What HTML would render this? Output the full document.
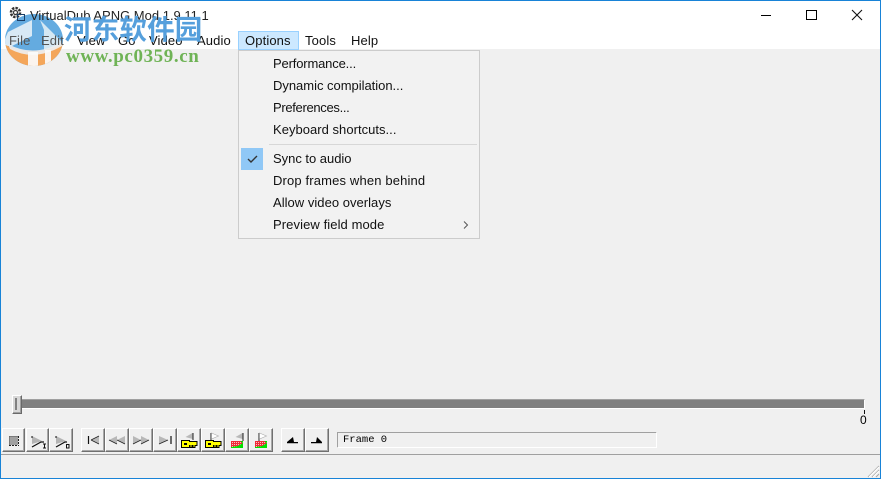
<!DOCTYPE html>
<html><head><meta charset="utf-8"><style>
html,body{margin:0;padding:0;background:#fff}
#w{position:relative;width:881px;height:479px;overflow:hidden;background:#f0f0f0;font-family:"Liberation Sans",sans-serif}
.t{position:absolute;white-space:nowrap;font-size:13px;line-height:16px;color:#111}
.m{letter-spacing:.12px}
.i{letter-spacing:-.02px}
.b{position:absolute;top:428px;height:24px;box-sizing:border-box;background:#f0f0f0;border:1px solid;border-color:#fff #707070 #707070 #fff;box-shadow:inset -1px -1px 0 #a8a8a8}
svg{position:absolute;left:0;top:0}
</style></head><body><div id="w">
<div style="position:absolute;left:0;top:0;width:881px;height:49px;background:#fff"></div>

<!-- logo sits beneath the window text -->
<svg width="70" height="70" viewBox="0 0 70 70">
<defs><clipPath id="c"><ellipse cx="34" cy="40" rx="29" ry="26"/></clipPath></defs>
<g clip-path="url(#c)">
<rect x="0" y="10" width="70" height="60" fill="#4f9fdc" opacity=".88"/>
<path d="M8 32L32 20V36L12 46H2Z" fill="#f2f6f9" opacity=".82"/>
<path d="M40 20L62 42V46L44 50V30Z" fill="#f4f7f9" opacity=".78"/>
<path d="M0 42Q34 62 70 40V70H0Z" fill="#f4a65a"/>
<path d="M8 44Q34 58 62 42L62 46Q34 62 10 49Z" fill="#eeeeee" opacity=".92"/>
<path d="M28 52h10v16h-10zM45 50h6v16h-6z" fill="#fbfbfb" opacity=".92"/>
</g>
</svg>

<svg width="881" height="479" viewBox="0 0 881 479" shape-rendering="crispEdges">
<rect x="238" y="31" width="60" height="18" fill="#cce8ff" stroke="#99d1ff" transform="translate(.5 .5)"/>
<path d="M761 15h10" stroke="#000" fill="none" transform="translate(0 .5)"/>
<rect x="806.500" y="10.500" width="10" height="9" fill="none" stroke="#000"/>
<g shape-rendering="geometricPrecision"><path d="M852 10l10 10M862 10l-10 10" stroke="#111" stroke-width="1.100" fill="none"/></g>
</svg>

<svg width="40" height="30" viewBox="0 0 40 30">
<g fill="none" stroke="#333"><circle cx="15.500" cy="12.500" r="4.500" stroke-width="2.600" stroke-dasharray="2.400 1.100"/><circle cx="15.500" cy="12.500" r="2" stroke-width="1.200"/><path d="M17.500 14.500h7v6h-7z" stroke-width="1" stroke="#1c3f66"/></g>
</svg>

<div class="t" style="left:30px;top:8px;font-size:13px;color:#222;letter-spacing:0">VirtualDub APNG Mod 1.9.11.1</div>
<div class="t m" style="left:9px;top:33px;color:#555">File</div>
<div class="t m" style="left:41px;top:33px;color:#555">Edit</div>
<div class="t m" style="left:77px;top:33px">View</div>
<div class="t m" style="left:118px;top:33px">Go</div>
<div class="t m" style="left:149px;top:33px">Video</div>
<div class="t m" style="left:197px;top:33px">Audio</div>
<div class="t m" style="left:245px;top:33px">Options</div>
<div class="t m" style="left:305px;top:33px">Tools</div>
<div class="t m" style="left:351px;top:33px">Help</div>

<div class="t" style="left:64px;top:12px;font-family:'Liberation Sans','Noto Sans CJK SC',sans-serif;font-weight:700;font-size:27.500px;line-height:36px;color:#559fdc;letter-spacing:.2px">河东软件园</div>
<div class="t" style="left:66px;top:47px;font-family:'Liberation Serif',serif;font-weight:700;font-size:19px;line-height:20px;color:#6fb356;letter-spacing:.6px">www.pc0359.cn</div>

<!-- menu -->
<div style="position:absolute;left:238px;top:50px;width:242px;height:189px;box-sizing:border-box;background:#f2f2f2;border:1px solid #ccc"></div>
<div style="position:absolute;left:269px;top:144px;width:208px;height:1px;background:#d7d7d7"></div>
<div style="position:absolute;left:241px;top:148px;width:22px;height:22px;background:#90c8f6"></div>
<svg width="881" height="479" viewBox="0 0 881 479">
<path d="M248 159l3 3 6-6" fill="none" stroke="#333" stroke-width="1.400"/>
<path d="M464 221.500l3.500 3.500-3.500 3.500" fill="none" stroke="#555" stroke-width="1"/>
</svg>
<div class="t" style="left:273px;top:56px;letter-spacing:-.16px">Performance...</div>
<div class="t" style="left:273px;top:78px;letter-spacing:-.02px">Dynamic compilation...</div>
<div class="t" style="left:273px;top:100px;letter-spacing:-.32px">Preferences...</div>
<div class="t" style="left:273px;top:122px;letter-spacing:.03px">Keyboard shortcuts...</div>
<div class="t" style="left:273px;top:151px;letter-spacing:-.02px">Sync to audio</div>
<div class="t" style="left:273px;top:173px;letter-spacing:.15px">Drop frames when behind</div>
<div class="t" style="left:273px;top:195px;letter-spacing:.03px">Allow video overlays</div>
<div class="t" style="left:273px;top:217px;letter-spacing:.09px">Preview field mode</div>

<!-- slider -->
<div style="position:absolute;left:14px;top:399px;width:851px;height:10px;box-sizing:border-box;background:#808080;border-top:1px solid #a0a0a0;border-right:1px solid #fff;border-bottom:1px solid #fff"></div>
<div style="position:absolute;left:12px;top:395px;width:10px;height:19px;box-sizing:border-box;background:#d8d8d8;border:1px solid;border-color:#fff #696969 #696969 #fff;box-shadow:inset -1px -1px 0 #a0a0a0"></div>
<div style="position:absolute;left:15px;top:398px;width:2px;height:12px;background:#808080"></div>
<div style="position:absolute;left:864px;top:410px;width:1px;height:4px;background:#111"></div>
<div class="t" style="left:860px;top:414px;font-size:12px;line-height:13px;color:#000">0</div>

<!-- buttons -->
<div class="b" style="left:2px;width:23px"></div><div class="b" style="left:26px;width:23px"></div><div class="b" style="left:49px;width:24px"></div>
<div class="b" style="left:81px;width:24px"></div><div class="b" style="left:105px;width:24px"></div><div class="b" style="left:129px;width:24px"></div><div class="b" style="left:153px;width:24px"></div>
<div class="b" style="left:177px;width:24px"></div><div class="b" style="left:201px;width:24px"></div><div class="b" style="left:225px;width:24px"></div><div class="b" style="left:249px;width:24px"></div>
<div class="b" style="left:281px;width:24px"></div><div class="b" style="left:305px;width:24px"></div>

<svg width="881" height="479" viewBox="0 0 881 479" shape-rendering="crispEdges">
<defs><pattern id="ck" width="2" height="2" patternUnits="userSpaceOnUse"><rect width="2" height="2" fill="#ee2a36"/><rect width="1" height="1" fill="#f9c0c0"/></pattern></defs>
<!-- stop -->
<rect x="9" y="436" width="9" height="9" fill="#a0a0a0"/>
<path d="M9.500 436.500h9M9.500 436.500v9" stroke="#555" stroke-dasharray="1 1" fill="none"/>
<path d="M18.500 436v10M9 445.500h10" stroke="#222" stroke-dasharray="2 1" fill="none"/>
<g shape-rendering="geometricPrecision">
<!-- play I / O -->
<path d="M32 436l10 5-10 3z" fill="#b4b4b4"/>
<path d="M32 436v2" stroke="#111"/><path d="M32 447l9-5h3" stroke="#111" stroke-width="1.200" fill="none"/>
<path d="M43 444h3M44.500 444v4M43 448h3" stroke="#111" fill="none"/>
<path d="M56 436l10 5-10 3z" fill="#b4b4b4"/>
<path d="M56 436v2" stroke="#111"/><path d="M56 447l9-5h2" stroke="#111" stroke-width="1.200" fill="none"/>
<rect x="66.500" y="444.500" width="2.500" height="3.500" fill="none" stroke="#111"/>
<!-- transport -->
<path d="M88.500 436v8" stroke="#111" stroke-width="1.200"/><path d="M91 440l8-4v8z" fill="#b8b8b8"/><path d="M91 440l8-4M91 440l8 4" stroke="#222" stroke-width=".8"/>
<path d="M109 440l8-4v8zM117 440l8-4v8z" fill="#b8b8b8"/><path d="M109 440l8 4M117 440l8 4" stroke="#222" stroke-width=".8"/>
<path d="M133 436l8 4-8 4zM141 436l8 4-8 4z" fill="#b8b8b8"/><path d="M133 444l8-4M141 444l8-4" stroke="#222" stroke-width=".8"/>
<path d="M159 436l9 4-9 4z" fill="#b8b8b8"/><path d="M159 444l9-4" stroke="#222" stroke-width=".8"/><path d="M171 436v8" stroke="#111" stroke-width="1.200"/>
<!-- flags -->
<path d="M193 433v7" stroke="#222"/><path d="M192.500 433l-7 4 7 2z" fill="#b8b8b8"/>
<path d="M211 433v7" stroke="#222"/><path d="M211.500 433l7 3-7 3z" fill="#fff" stroke="#aaa" stroke-width=".6"/>
<path d="M243 433v8" stroke="#222"/><path d="M242.500 433l-7 4 7 2z" fill="#b8b8b8"/>
<path d="M259 433v8" stroke="#222"/><path d="M259.500 433l7 3-7 3z" fill="#fff" stroke="#aaa" stroke-width=".6"/>
</g>
<!-- keys -->
<g fill="#ffff00" stroke="#000">
<path d="M181.500 440.500h8v1h7.500v4h-2v2h-2v-2h-1v2h-2v-2h-0.500v2h-8z"/>
<path d="M205.500 440.500h8v1h7.500v4h-2v2h-2v-2h-1v2h-2v-2h-0.500v2h-8z"/>
</g>
<rect x="184" y="443" width="3" height="2" fill="#000"/><rect x="208" y="443" width="3" height="2" fill="#000"/>
<!-- marks -->
<rect x="231" y="441" width="12" height="7" fill="#00e000"/>
<path d="M231 441h9l3 2-5 3-7 1z" fill="url(#ck)"/>
<rect x="255" y="441" width="12" height="7" fill="#00e000"/>
<path d="M255 441h9l3 2-5 3-7 1z" fill="url(#ck)"/>
<!-- arrows -->
<g shape-rendering="geometricPrecision">
<path d="M287 442l6-5 1 5h4v1.200h-11z" fill="#000"/>
<path d="M311 442h5l1-5 5 5v1.200h-11z" fill="#000"/>
</g>
<!-- frame box -->
<path d="M337 447v-15h319" fill="none" stroke="#a0a0a0" transform="translate(.5 .5)"/>
<path d="M656 432v15h-319" fill="none" stroke="#fff" transform="translate(.5 .5)"/>
<!-- status -->
<rect x="1" y="454" width="879" height="1" fill="#a0a0a0"/>
<!-- grip -->
<g shape-rendering="geometricPrecision" stroke-width="1"><path d="M868 477l11-11M872 477l7-7M876 477l3-3" stroke="#a8a8a8" fill="none"/><path d="M869 477l10-10M873 477l6-6" stroke="#fff" fill="none"/></g>
<!-- window border -->
<rect x="0" y="0" width="881" height="1" fill="#1883d7"/>
<rect x="0" y="0" width="1" height="479" fill="#1883d7"/>
<rect x="880" y="0" width="1" height="479" fill="#1883d7"/>
<rect x="0" y="478" width="881" height="1" fill="#1883d7"/>
</svg>
<div class="t" style="left:343px;top:434px;font-family:'Liberation Mono',monospace;font-size:10.500px;line-height:13px;color:#000">Frame 0</div>
</div></body></html>
